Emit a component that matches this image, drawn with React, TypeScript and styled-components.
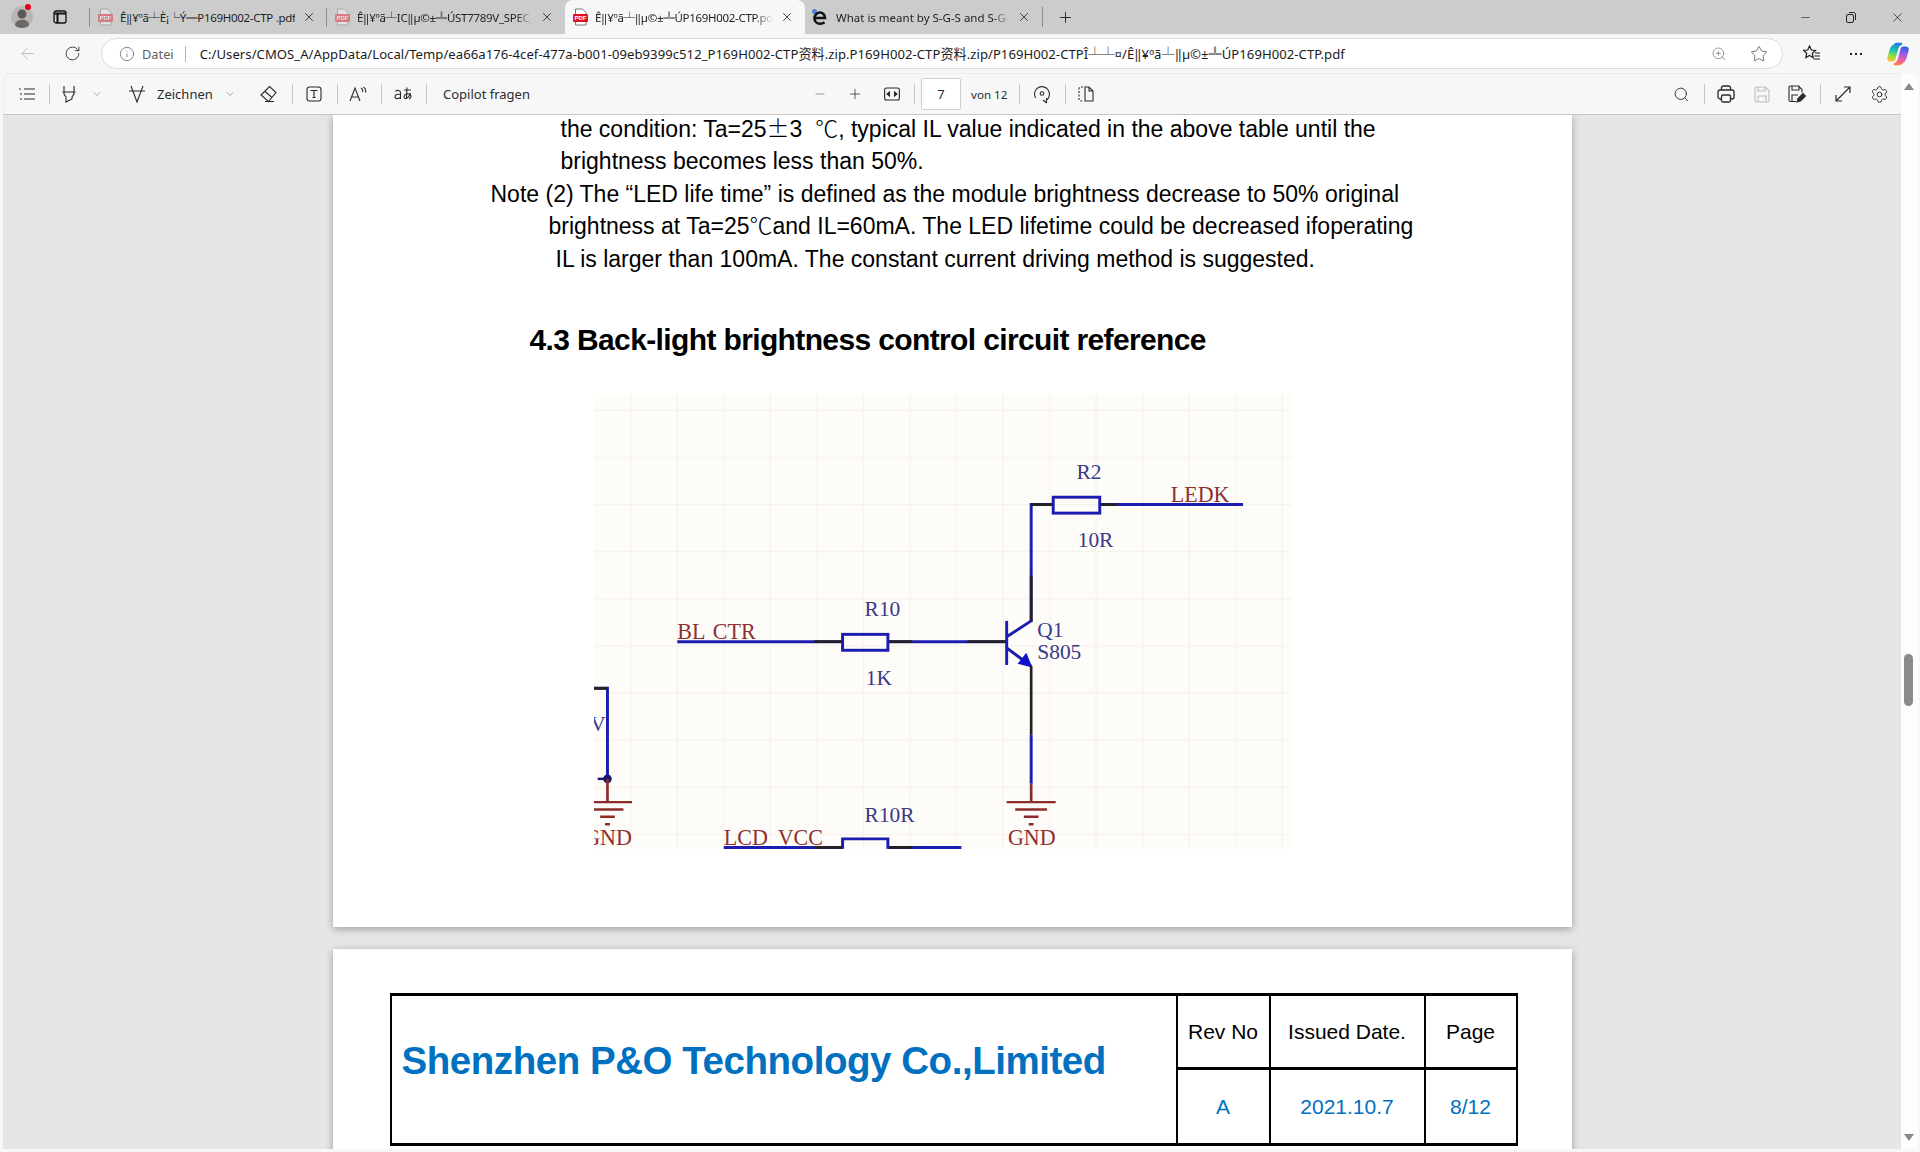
import React from "react";
import styled, { createGlobalStyle } from "styled-components";
import {
  ArrowLeft,
  ChevronDown,
  Info,
  Minus,
  Plus,
  RotateCw,
  Search,
  Settings,
  Star,
  X,
  ZoomIn,
} from "lucide-react";

const GlobalStyle = createGlobalStyle`
  html, body {
    margin: 0;
    padding: 0;
    height: 100%;
    overflow: hidden;
    background: #f7f7f7;
  }
  * { box-sizing: border-box; }
`;

const uiFont = `"Noto Sans", "Noto Sans CJK SC", sans-serif`;
const docFont = `"Liberation Sans", Arial, sans-serif`;
const cjkFont = `"Noto Sans CJK SC", sans-serif`;

const Window = styled.div`
  width: 1920px;
  height: 1152px;
  display: flex;
  flex-direction: column;
  font-family: ${uiFont};
  color: #1b1b1b;
  background: #f7f7f7;
`;

/* tab strip */
const TabStrip = styled.div`
  height: 34px;
  flex: none;
  display: flex;
  align-items: stretch;
  background: #cccccc;
`;

const StripSlot = styled.div<{ $w: number }>`
  width: ${({ $w }) => $w}px;
  flex: none;
  display: flex;
  align-items: center;
  justify-content: center;
  position: relative;
`;

const Avatar = styled.div`
  width: 22px;
  height: 22px;
  border-radius: 50%;
  background: #b9b6b3;
  overflow: hidden;
  position: relative;
`;

const RedDot = styled.span`
  position: absolute;
  left: 25px;
  top: 4px;
  width: 6px;
  height: 6px;
  border-radius: 50%;
  background: #e3001b;
`;

const Tab = styled.div<{ $active?: boolean; $w: number; $divider?: boolean }>`
  width: ${({ $w }) => $w}px;
  flex: none;
  display: flex;
  align-items: center;
  padding: 0 8px 0 3px;
  font-size: 11.5px;
  position: relative;
  background: ${({ $active }) => ($active ? "#f7f7f7" : "transparent")};
  border-radius: ${({ $active }) => ($active ? "8px 8px 0 0" : "0")};
  color: ${({ $active }) => ($active ? "#222" : "#1f1f1f")};
  &::before {
    content: "";
    display: ${({ $divider }) => ($divider ? "block" : "none")};
    position: absolute;
    left: -1px;
    top: 8px;
    bottom: 7px;
    width: 1px;
    background: #8d8d8d;
  }
`;

const TabIcon = styled.span`
  width: 20px;
  flex: none;
  display: flex;
  align-items: center;
  justify-content: center;
  margin-left: 2px;
`;

const TabTitle = styled.span<{ $fade?: boolean; $tight?: boolean }>`
  flex: 1;
  min-width: 0;
  margin-left: ${({ $tight }) => ($tight ? "5px" : "6px")};
  overflow: hidden;
  white-space: nowrap;
  letter-spacing: ${({ $tight }) => ($tight ? "-0.3px" : "0")};
  mask-image: ${({ $fade }) =>
    $fade ? "linear-gradient(to right, #000 90%, transparent)" : "none"};
`;

const TabClose = styled.span`
  width: 24px;
  flex: none;
  display: flex;
  justify-content: flex-end;
  padding-right: 3px;
`;

const StripSep = styled.span`
  width: 1px;
  height: 20px;
  align-self: center;
  background: #8d8d8d;
  flex: none;
`;

const WindowButtons = styled.div`
  margin-left: auto;
  display: flex;
  align-items: center;
`;

const WindowButton = styled.span`
  width: 46px;
  display: flex;
  justify-content: center;
`;

/* address row */
const AddressRow = styled.div`
  height: 39px;
  flex: none;
  display: flex;
  align-items: center;
`;

const NavSlot = styled.span<{ $w: number }>`
  width: ${({ $w }) => $w}px;
  flex: none;
  display: flex;
  align-items: center;
  justify-content: center;
`;

const AddressPill = styled.div`
  width: 1682px;
  height: 31px;
  flex: none;
  display: flex;
  align-items: center;
  background: #fff;
  border: 1px solid #dcdcdc;
  border-radius: 16px;
  font-size: 13.1px;
  padding-left: 17px;
`;

const SiteLabel = styled.span`
  color: #5e5e5e;
  margin-left: 7px;
  font-size: 12.8px;
`;

const PillSep = styled.span`
  width: 1px;
  height: 16px;
  background: #b5b5b5;
  margin: 0 14px 0 11px;
  flex: none;
`;

const AddressText = styled.span`
  white-space: nowrap;
  letter-spacing: 0.05px;
`;

const PillActions = styled.div`
  margin-left: auto;
  display: flex;
  align-items: center;
  gap: 23px;
  padding-right: 14px;
`;

/* pdf pane */
const PaneRow = styled.div`
  flex: 1;
  min-height: 0;
  display: flex;
  padding: 0 2px 3px 3px;
`;

const PdfColumn = styled.div`
  width: 1898px;
  flex: none;
  display: flex;
  flex-direction: column;
  min-height: 0;
`;

const PdfToolbar = styled.div`
  height: 42px;
  flex: none;
  display: grid;
  grid-template-columns: 793px auto 1fr;
  align-items: center;
  padding: 0 4px 0 7px;
  background: #f7f7f7;
  border-top: 1px solid #ececec;
  border-left: 1px solid #ececec;
  border-bottom: 1px solid #c8c8c8;
  border-radius: 8px 0 0 0;
  font-size: 13px;
  color: #2b2b2b;
`;

const ToolGroup = styled.div<{ $end?: boolean }>`
  display: flex;
  align-items: center;
  justify-content: ${({ $end }) => ($end ? "flex-end" : "flex-start")};
`;

const Tool = styled.span<{ $w: number }>`
  width: ${({ $w }) => $w}px;
  height: 32px;
  flex: none;
  display: flex;
  align-items: center;
  justify-content: center;
`;

const ToolSep = styled.span<{ $w: number }>`
  width: ${({ $w }) => $w}px;
  flex: none;
  display: flex;
  justify-content: center;
  &::after {
    content: "";
    width: 1px;
    height: 20px;
    background: #c6c6c6;
  }
`;

const DrawButton = styled.span`
  display: flex;
  align-items: center;
  margin-left: 9px;
  padding: 0 8px;
  width: 126px;
  flex: none;
`;

const DrawLabel = styled.span`
  margin: 0 11px;
`;

const CopilotLabel = styled.span`
  margin-left: 11px;
  white-space: nowrap;
`;

const PageBox = styled.span`
  width: 40px;
  height: 32px;
  margin-left: 3px;
  flex: none;
  display: flex;
  align-items: center;
  justify-content: center;
  background: #fff;
  border: 1px solid #d0d0d0;
  border-radius: 2px;
`;

const PageCount = styled.span`
  width: 35px;
  margin-left: 10px;
  flex: none;
  white-space: nowrap;
  font-size: 11.6px;
`;

const Viewer = styled.div`
  flex: 1;
  min-height: 0;
  background: #e6e6e6;
  overflow: hidden;
  display: flex;
  flex-direction: column;
  align-items: center;
  gap: 22px;
`;

const Page = styled.section<{ $h: number }>`
  width: 1239px;
  height: ${({ $h }) => $h}px;
  flex: none;
  background: #fff;
  box-shadow: 0 2px 8px rgba(0, 0, 0, 0.32);
  font-family: ${docFont};
  color: #000;
`;

const NotePage = styled(Page)`
  padding-top: 0;
`;

const NoteLine = styled.p<{ $indent: number }>`
  margin: 0;
  padding-left: ${({ $indent }) => $indent}px;
  font-size: 23px;
  line-height: 32.4px;
  white-space: pre;
  transform: translateY(-2.5px);
`;

const Cjk = styled.span`
  font-family: ${cjkFont};
  line-height: 0;
  font-weight: 300;
`;

const SectionTitle = styled.h2`
  margin: 48px 0 0;
  padding-left: 197px;
  font-size: 30px;
  line-height: 36px;
  font-weight: 700;
  letter-spacing: -0.63px;
  transform: translateY(-3px);
`;

const Schematic = styled.svg`
  display: block;
  width: 698px;
  height: 455px;
  margin: 33px 0 0 261px;
`;

const HeaderPage = styled(Page)`
  padding: 44px 0 0 57px;
`;

const HeaderTable = styled.div`
  width: 1128px;
  height: 153px;
  display: grid;
  grid-template-columns: 784px 93px 155px 1fr;
  grid-template-rows: 71px 1fr;
  border-top: 3px solid #000;
  border-bottom: 3px solid #000;
  border-left: 2px solid #000;
  border-right: 2px solid #000;
`;

const TitleCell = styled.div`
  grid-row: 1 / span 2;
  display: flex;
  align-items: center;
  padding: 0 0 18px 10px;
  color: #0070c0;
  font-size: 38.5px;
  font-weight: 700;
  letter-spacing: -0.45px;
  white-space: nowrap;
`;

const InfoCell = styled.div<{ $value?: boolean }>`
  display: flex;
  align-items: center;
  justify-content: center;
  border-left: 2px solid #000;
  border-top: ${({ $value }) => ($value ? "3px solid #000" : "0")};
  color: ${({ $value }) => ($value ? "#0070c0" : "#000")};
  font-size: 21px;
`;

const ScrollColumn = styled.div`
  flex: 1;
  position: relative;
  background: #fdfdfd;
  border-radius: 0 8px 0 0;
`;

const ScrollArrow = styled.span<{ $down?: boolean }>`
  position: absolute;
  left: 3px;
  ${({ $down }) => ($down ? "bottom: 8px;" : "top: 10px;")}
  width: 0;
  height: 0;
  border-left: 5px solid transparent;
  border-right: 5px solid transparent;
  border-bottom: ${({ $down }) => ($down ? "0" : "7px solid #8a8a8a")};
  border-top: ${({ $down }) => ($down ? "7px solid #8a8a8a" : "0")};
`;

const ScrollThumb = styled.span`
  position: absolute;
  left: 3px;
  top: 581px;
  width: 9px;
  height: 52px;
  border-radius: 5px;
  background: #8b8b8b;
`;

function PdfFavicon({ dim }: { dim?: boolean }) {
  return (
    <svg width="17" height="18" viewBox="0 0 17 18" opacity={dim ? 0.42 : 1}>
      <path d="M3.500 1h7l3.500 3.500V17h-10.500z" fill="#fff" stroke="#777" />
      <rect x="1" y="6" width="15" height="8" rx="1" fill="#e3101e" />
      <text x="8.500" y="12.200" fontSize="6" fontWeight="700" fill="#fff" textAnchor="middle" fontFamily="Liberation Sans">
        PDF
      </text>
    </svg>
  );
}

function EdgeE() {
  return (
    <svg width="18" height="18" viewBox="0 0 18 18">
      <circle cx="3.500" cy="3.500" r="2.500" fill="#4a86d0" />
      <path d="M4.500 10h9.500c0-3-2.200-5.500-5-5.500s-5.500 2.500-5.500 5.700 2.400 5.500 5.500 5.500c2 0 3.400-.6 4.500-1.500" fill="none" stroke="#111" strokeWidth="2.600" />
    </svg>
  );
}

function CopilotLogo() {
  return (
    <svg width="22" height="24" viewBox="0 0 22 24">
      <defs>
        <linearGradient id="copA" x1="0.600" y1="0" x2="0.400" y2="1">
          <stop offset="0" stopColor="#1a7fe6" />
          <stop offset="0.45" stopColor="#22c7b0" />
          <stop offset="0.75" stopColor="#9ddc3e" />
          <stop offset="1" stopColor="#f6c12f" />
        </linearGradient>
        <linearGradient id="copB" x1="0.600" y1="0" x2="0.400" y2="1">
          <stop offset="0" stopColor="#2a5ce8" />
          <stop offset="0.4" stopColor="#a55be6" />
          <stop offset="0.75" stopColor="#f05fa0" />
          <stop offset="1" stopColor="#ff7d3a" />
        </linearGradient>
      </defs>
      <path d="M6.500 2.500C7.500 1.200 9 .8 10.500.8H14c1.300 0 1.500 1 1 2-1.800.6-3 1.800-3.600 3.800L8.500 17c-.5 1.800-1.800 2.500-3.200 2.500H3.500C1.200 19.500-.3 17.800.4 15.400L2.600 7.500c.6-2.200 2.200-4 3.900-5z" fill="url(#copA)" />
      <path d="M15.500 21.500c-1 1.300-2.500 1.700-4 1.700H8c-1.300 0-1.500-1-1-2 1.800-.6 3-1.800 3.600-3.800L13.500 7c.5-1.800 1.800-2.500 3.200-2.500h1.800c2.300 0 3.800 1.700 3.100 4.100l-2.200 7.900c-.6 2.200-2.200 4-3.900 5z" fill="url(#copB)" />
    </svg>
  );
}

const stroke = { fill: "none", stroke: "#2b2b2b", strokeWidth: 1.1 };

function ListIcon() {
  return (
    <svg width="16" height="12" viewBox="0 0 16 12" {...stroke}>
      <path d="M0 1h2M5 1h11M1 6h2M5 6h11M1 11h2M5 11h11" />
    </svg>
  );
}

function HighlighterIcon() {
  return (
    <svg width="16" height="18" viewBox="0 0 16 18" {...stroke}>
      <path d="M1.500 7h13M3 1v8l2 3v5l6-3v-2l2-3V1" />
    </svg>
  );
}

function DrawIcon() {
  return (
    <svg width="18" height="18" viewBox="0 0 18 18" {...stroke}>
      <path d="M1 6h16M3 1l6 16 6-16" />
    </svg>
  );
}

function EraserIcon() {
  return (
    <svg width="18" height="18" viewBox="0 0 18 18" {...stroke}>
      <path d="M10.500 1.500L17 7.500 9.500 16.500 2 10zM5.500 6l7 6M6 16.500h9" />
    </svg>
  );
}

function TextBoxIcon() {
  return (
    <svg width="16" height="16" viewBox="0 0 16 16" {...stroke}>
      <rect x="1" y="1" width="14" height="14" rx="2.500" />
      <path d="M4.500 4.500h7M8 4.500v7M6.500 11.500h3" />
    </svg>
  );
}

function ReadAloudIcon() {
  return (
    <svg width="18" height="16" viewBox="0 0 18 16" {...stroke}>
      <path d="M1 15L6 2l5 13M2.800 11h6.400M12 2c1.500 1 2 2.400 1.500 4M14.500 1c2 1.400 2.600 3.400 2 5.600" />
    </svg>
  );
}

function TranslateLabel() {
  return (
    <svg width="18" height="16" viewBox="0 0 18 16" {...stroke}>
      <path d="M1.500 5.500c1-1.600 5-1.600 5 1V13M6.500 8.500c-3-.6-5.500 0-5.500 2.300 0 2.400 4 2.400 5.500.2" />
      <path d="M10 4h7M13 1.500c-.2 4-.5 8-.5 11.500M16.500 7c-1 4-4 6-5.500 5.500S9.600 9 12.500 8c2-.7 4.500.2 4.500 2.200 0 1.400-1 2.300-2 2.800" />
    </svg>
  );
}

function FitWidthIcon() {
  return (
    <svg width="16" height="14" viewBox="0 0 16 14" {...stroke}>
      <rect x="0.600" y="1" width="14.800" height="12" rx="2" />
      <path d="M5.500 5L3 7l2.500 2zM10.500 5L13 7l-2.500 2z" fill="#2b2b2b" />
    </svg>
  );
}

function RotateIcon() {
  return (
    <svg width="18" height="20" viewBox="0 0 18 20" {...stroke}>
      <path d="M2.500 14A7.500 7.500 0 1 1 13 16.500" />
      <path d="M10 16l3.500 3M13.500 14v5" />
      <circle cx="9" cy="9.500" r="1.800" />
    </svg>
  );
}

function SpreadIcon() {
  return (
    <svg width="16" height="16" viewBox="0 0 16 16" {...stroke}>
      <path d="M5 1H2.500A1.500 1.500 0 0 0 1 2.500v11A1.500 1.500 0 0 0 2.500 15H5" strokeDasharray="2 1.500" />
      <path d="M7 1h4l4 4v10H7zM11 1v4h4" />
    </svg>
  );
}

function PrintIcon() {
  return (
    <svg width="18" height="18" viewBox="0 0 18 18" {...stroke} strokeWidth={1.3}>
      <path d="M4.500 5V3a2 2 0 0 1 2-2h5a2 2 0 0 1 2 2v2" />
      <path d="M4.500 14H3a2 2 0 0 1-2-2V7a2 2 0 0 1 2-2h12a2 2 0 0 1 2 2v5a2 2 0 0 1-2 2h-1.500" />
      <rect x="4.500" y="10" width="9" height="7" rx="1.500" />
    </svg>
  );
}

function SaveIcon({ dim }: { dim?: boolean }) {
  return (
    <svg width="16" height="17" viewBox="0 0 16 17" fill="none" stroke={dim ? "#bdbdbd" : "#2b2b2b"} strokeWidth={1.1}>
      <path d="M1 2.500A1.500 1.500 0 0 1 2.500 1h9L15 4.500v10a1.500 1.500 0 0 1-1.500 1.500h-11A1.500 1.500 0 0 1 1 14.500z" />
      <path d="M4 1v4h7V1M4 16v-6h8v6" />
    </svg>
  );
}

function SaveAsIcon() {
  return (
    <svg width="18" height="18" viewBox="0 0 18 18" {...stroke}>
      <path d="M8 16.500H2.500A1.500 1.500 0 0 1 1 15V2.500A1.500 1.500 0 0 1 2.500 1h8L14 4.500v3" />
      <path d="M4 1v4h7V1M4 16v-6h6" />
      <path d="M9 17l1-3.500 5-5 2.500 2.500-5 5z" fill="#2b2b2b" />
    </svg>
  );
}

function ExpandIcon() {
  return (
    <svg width="16" height="16" viewBox="0 0 16 16" {...stroke} strokeWidth={1.2}>
      <path d="M1 15L15 1M9 1h6v6M1 9v6h6" />
    </svg>
  );
}

function FavoritesIcon() {
  return (
    <svg width="18" height="17" viewBox="0 0 18 17" fill="none" stroke="#1b1b1b" strokeWidth={1.2}>
      <path d="M6.500 1l1.800 4 4.200.4-3.200 2.900.9 4.300-3.700-2.200-3.700 2.200.9-4.300L.500 5.400l4.200-.4z" />
      <path d="M12 8h5M11.500 11h5.500M10.500 14h6.500" />
    </svg>
  );
}

function TabActionsIcon() {
  return (
    <svg width="14" height="14" viewBox="0 0 14 14" fill="none" stroke="#111" strokeWidth={1.3}>
      <rect x="1" y="1" width="12" height="12" rx="2" />
      <path d="M1 3.500h12M4.500 3.500V13" strokeWidth={2} />
    </svg>
  );
}

function RestoreIcon() {
  return (
    <svg width="10" height="11" viewBox="0 0 10 11" fill="none" stroke="#222" strokeWidth={1}>
      <rect x="0.500" y="2.500" width="7" height="8" rx="1.500" />
      <path d="M3 .500h4.500a2 2 0 0 1 2 2V8" />
    </svg>
  );
}

function Ground({ x, y }: { x: number; y: number }) {
  return (
    <g stroke="#8c2b2b" strokeWidth="2">
      <path d={`M${x - 20} ${y}h40M${x - 13} ${y + 6}h26M${x - 6} ${y + 12}h12M${x - 2} ${y + 18}h4`} />
    </g>
  );
}

const gridX = Array.from({ length: 15 }, (_, i) => 515 + i * 38);
const gridY = Array.from({ length: 10 }, (_, i) => 335 + i * 38.5);

function CircuitDrawing() {
  const wire = { stroke: "#1c1cb0", strokeWidth: 2.4, fill: "none" };
  const dark = { stroke: "#222", strokeWidth: 2.2, fill: "none" };
  const navy = { fill: "#3a3a86", fontFamily: "Liberation Serif", fontSize: 17.5 };
  const maroon = { fill: "#8c3030", fontFamily: "Liberation Serif", fontSize: 18 };
  return (
    <Schematic viewBox="485 322 570 371">
      <rect x="485" y="322" width="570" height="371" fill="#fefcf9" />
      <g stroke="#f6f2ec" strokeWidth="1">
        {gridX.map((x) => (
          <path key={x} d={`M${x} 322V693`} />
        ))}
        {gridY.map((y) => (
          <path key={y} d={`M485 ${y}H1055`} />
        ))}
      </g>

      {/* top resistor and collector */}
      <path d="M842 508V412H860M898 412H1015" {...wire} />
      <path d="M842 412H860M898 412H912M842 470V508" {...dark} />
      <rect x="860" y="406" width="38" height="13" fill="#fefcf9" {...wire} />

      {/* base line */}
      <path d="M553 524H688M725 524H822" {...wire} />
      <path d="M665 524H688M725 524H745M790 524H822" {...dark} />
      <rect x="688" y="518" width="37" height="13" fill="#fefcf9" {...wire} />

      {/* transistor */}
      <path d="M822 507V543" {...wire} />
      <path d="M822 520L842 507" {...wire} />
      <path d="M822 529L842 544" {...wire} />
      <path d="M843 545L831 542L838 533Z" fill="#1010c8" />
      <path d="M842 544V600" {...dark} />
      <path d="M842 600V640" {...wire} />
      <path d="M842 640V655" stroke="#8c2b2b" strokeWidth="2.2" />
      <Ground x={842} y={655} />

      {/* left fragment */}
      <path d="M485 562H496V636" {...wire} />
      <path d="M485 562H496" {...dark} />
      <circle cx="496" cy="636" r="3.500" fill="#16166e" />
      <path d="M488 636H496" stroke="#16166e" strokeWidth="2" />
      <path d="M496 636V655" stroke="#8c2b2b" strokeWidth="2.2" />
      <Ground x={496} y={655} />

      {/* bottom resistor, cut by the image edge */}
      <path d="M591 692H688M725 692H785" {...wire} />
      <path d="M665 692H688M725 692H745" {...dark} />
      <path d="M688 693V685H725V693" {...wire} />

      <text x="879" y="391" {...navy}>R2</text>
      <text x="880" y="447" {...navy}>10R</text>
      <text x="706" y="503" {...navy}>R10</text>
      <text x="707" y="559" {...navy}>1K</text>
      <text x="847" y="520" {...navy}>Q1</text>
      <text x="847" y="538" {...navy}>S805</text>
      <text x="706" y="671" {...navy}>R10R</text>
      <text x="482" y="597" {...navy}>V</text>

      <text x="956" y="410" {...maroon}>LEDK</text>
      <text x="553" y="522" {...maroon}>BL</text>
      <text x="582" y="522" {...maroon}>CTR</text>
      <text x="591" y="690" {...maroon}>LCD</text>
      <text x="635" y="690" {...maroon}>VCC</text>
      <text x="823" y="690" {...maroon}>GND</text>
      <text x="477" y="690" {...maroon}>GND</text>
    </Schematic>
  );
}

const closeIcon = <X size={14} strokeWidth={1.4} color="#222" />;

export default function App() {
  return (
    <Window>
      <GlobalStyle />
      <TabStrip>
        <StripSlot $w={44}>
          <Avatar>
            <svg width="22" height="22" viewBox="0 0 22 22">
              <circle cx="11" cy="8" r="4.500" fill="#5c5a58" />
              <ellipse cx="11" cy="19" rx="7" ry="5.500" fill="#6b6967" />
            </svg>
          </Avatar>
          <RedDot />
        </StripSlot>
        <StripSlot $w={32}>
          <TabActionsIcon />
        </StripSlot>
        <StripSlot $w={14} />
        <Tab $w={237} $divider>
          <TabIcon><PdfFavicon dim /></TabIcon>
          <TabTitle $tight>Ê‖¥ºã┴È¡└Ý═P169H002-CTP .pdf</TabTitle>
          <TabClose>{closeIcon}</TabClose>
        </Tab>
        <Tab $w={238} $divider>
          <TabIcon><PdfFavicon dim /></TabIcon>
          <TabTitle $fade $tight>Ê‖¥ºã┴IC‖µ©±╩ÚST7789V_SPEC_V1.0.pdf</TabTitle>
          <TabClose>{closeIcon}</TabClose>
        </Tab>
        <Tab $w={240} $active>
          <TabIcon><PdfFavicon /></TabIcon>
          <TabTitle $fade $tight>Ê‖¥ºã┴‖µ©±╩ÚP169H002-CTP.pdf</TabTitle>
          <TabClose>{closeIcon}</TabClose>
        </Tab>
        <Tab $w={237}>
          <TabIcon><EdgeE /></TabIcon>
          <TabTitle $fade>What is meant by S-G-S and S-G-S-G</TabTitle>
          <TabClose>{closeIcon}</TabClose>
        </Tab>
        <StripSep />
        <StripSlot $w={44}>
          <Plus size={17} strokeWidth={1.2} color="#111" />
        </StripSlot>
        <WindowButtons>
          <WindowButton><Minus size={13} strokeWidth={1.2} color="#222" /></WindowButton>
          <WindowButton><RestoreIcon /></WindowButton>
          <WindowButton><X size={15} strokeWidth={1.2} color="#222" /></WindowButton>
        </WindowButtons>
      </TabStrip>

      <AddressRow>
        <NavSlot $w={54}><ArrowLeft size={19} strokeWidth={1.1} color="#b5b5b5" /></NavSlot>
        <NavSlot $w={36}><RotateCw size={17} strokeWidth={1.2} color="#2b2b2b" /></NavSlot>
        <NavSlot $w={11} />
        <AddressPill>
          <Info size={16} strokeWidth={1.1} color="#5e5e5e" />
          <SiteLabel>Datei</SiteLabel>
          <PillSep />
          <AddressText>
            C:/Users/CMOS_A/AppData/Local/Temp/ea66a176-4cef-477a-b001-09eb9399c512_P169H002-CTP资料.zip.P169H002-CTP资料.zip/P169H002-CTPÎ┴┴¤/Ê‖¥ºã┴‖µ©±╩ÚP169H002-CTP.pdf
          </AddressText>
          <PillActions>
            <ZoomIn size={16} strokeWidth={1} color="#666" />
            <Star size={18} strokeWidth={1} color="#444" />
          </PillActions>
        </AddressPill>
        <NavSlot $w={58}><FavoritesIcon /></NavSlot>
        <NavSlot $w={30}>
          <svg width="14" height="4" viewBox="0 0 14 4"><path d="M1 1h2v2H1zM6 1h2v2H6zM11 1h2v2h-2z" fill="#222" /></svg>
        </NavSlot>
        <NavSlot $w={54}><CopilotLogo /></NavSlot>
      </AddressRow>

      <PaneRow>
        <PdfColumn>
          <PdfToolbar>
            <ToolGroup>
              <Tool $w={32}><ListIcon /></Tool>
              <ToolSep $w={12} />
              <Tool $w={28}><HighlighterIcon /></Tool>
              <Tool $w={28}><ChevronDown size={12} strokeWidth={1} color="#555" /></Tool>
              <DrawButton>
                <DrawIcon />
                <DrawLabel>Zeichnen</DrawLabel>
                <ChevronDown size={12} strokeWidth={1} color="#555" />
              </DrawButton>
              <Tool $w={44}><EraserIcon /></Tool>
              <ToolSep $w={4} />
              <Tool $w={40}><TextBoxIcon /></Tool>
              <ToolSep $w={6} />
              <Tool $w={36}><ReadAloudIcon /></Tool>
              <ToolSep $w={10} />
              <Tool $w={34}><TranslateLabel /></Tool>
              <ToolSep $w={12} />
              <CopilotLabel>Copilot fragen</CopilotLabel>
            </ToolGroup>
            <ToolGroup>
              <Tool $w={32}><Minus size={14} strokeWidth={1.2} color="#777" /></Tool>
              <Tool $w={38}><Plus size={16} strokeWidth={1.1} color="#2b2b2b" /></Tool>
              <Tool $w={36}><FitWidthIcon /></Tool>
              <ToolSep $w={8} />
              <PageBox>7</PageBox>
              <PageCount>von 12</PageCount>
              <ToolSep $w={26} />
              <Tool $w={20}><RotateIcon /></Tool>
              <ToolSep $w={26} />
              <Tool $w={16}><SpreadIcon /></Tool>
            </ToolGroup>
            <ToolGroup $end>
              <Tool $w={40}><Search size={17} strokeWidth={1.3} color="#2b2b2b" /></Tool>
              <ToolSep $w={6} />
              <Tool $w={38}><PrintIcon /></Tool>
              <Tool $w={34}><SaveIcon dim /></Tool>
              <Tool $w={36}><SaveAsIcon /></Tool>
              <ToolSep $w={10} />
              <Tool $w={36}><ExpandIcon /></Tool>
              <Tool $w={36}><Settings size={19} strokeWidth={1.2} color="#2b2b2b" /></Tool>
            </ToolGroup>
          </PdfToolbar>
          <Viewer>
            <NotePage $h={812}>
              <NoteLine $indent={228}>
                the condition: Ta=25<Cjk>±</Cjk>3  <Cjk>℃</Cjk>, typical IL value indicated in the above table until the
              </NoteLine>
              <NoteLine $indent={228}>brightness becomes less than 50%.</NoteLine>
              <NoteLine $indent={158}>Note (2) The “LED life time” is defined as the module brightness decrease to 50% original</NoteLine>
              <NoteLine $indent={216}>
                brightness at Ta=25<Cjk>℃</Cjk>and IL=60mA. The LED lifetime could be decreased ifoperating
              </NoteLine>
              <NoteLine $indent={223}>IL is larger than 100mA. The constant current driving method is suggested.</NoteLine>
              <SectionTitle>4.3 Back-light brightness control circuit reference</SectionTitle>
              <CircuitDrawing />
            </NotePage>
            <HeaderPage $h={220}>
              <HeaderTable>
                <TitleCell>Shenzhen P&amp;O Technology Co.,Limited</TitleCell>
                <InfoCell>Rev No</InfoCell>
                <InfoCell>Issued Date.</InfoCell>
                <InfoCell>Page</InfoCell>
                <InfoCell $value>A</InfoCell>
                <InfoCell $value>2021.10.7</InfoCell>
                <InfoCell $value>8/12</InfoCell>
              </HeaderTable>
            </HeaderPage>
          </Viewer>
        </PdfColumn>
        <ScrollColumn>
          <ScrollArrow />
          <ScrollThumb />
          <ScrollArrow $down />
        </ScrollColumn>
      </PaneRow>
    </Window>
  );
}
